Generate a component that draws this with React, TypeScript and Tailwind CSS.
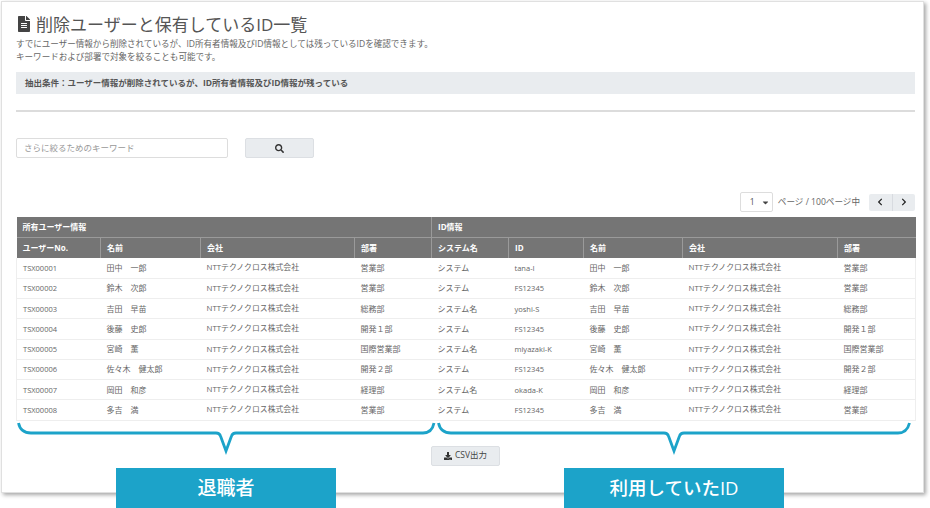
import { FaFileAlt, FaSearch, FaDownload, FaChevronLeft, FaChevronRight, FaCaretDown } from "react-icons/fa";

const rows = [
  ["TSX00001", "田中　一郎", "営業部", "システム", "tana-I"],
  ["TSX00002", "鈴木　次郎", "営業部", "システム", "FS12345"],
  ["TSX00003", "吉田　早苗", "総務部", "システム名", "yoshi-S"],
  ["TSX00004", "後藤　史郎", "開発１部", "システム", "FS12345"],
  ["TSX00005", "宮崎　薫", "国際営業部", "システム名", "miyazaki-K"],
  ["TSX00006", "佐々木　健太郎", "開発２部", "システム", "FS12345"],
  ["TSX00007", "岡田　和彦", "経理部", "システム名", "okada-K"],
  ["TSX00008", "多吉　満", "営業部", "システム", "FS12345"],
];

const company = "NTTテクノクロス株式会社";
const widths = ["w-[84px]", "w-[100px]", "w-[154px]", "w-[77px]", "w-[77px]", "w-[75px]", "w-[99px]", "w-[155px]", "w-[78px]"];
const heads = ["ユーザーNo.", "名前", "会社", "部署", "システム名", "ID", "名前", "会社", "部署"];

export default function App() {
  return (
    <div className="relative h-[508px] w-[930px] overflow-hidden bg-white font-['Open_Sans','Noto_Sans_CJK_JP',sans-serif] text-[#666]">
      <div className="ml-px mt-px h-[492px] w-[923px] border border-[#e0e0e0] bg-white px-[14px] pt-[12px] shadow-[2px_2px_4px_rgba(0,0,0,0.35)]">
        <h1 className="flex h-[20px] items-center gap-[4px] text-[17px] font-normal leading-none text-[#555]">
          <FaFileAlt className="text-[16px] text-[#444]" />
          削除ユーザーと保有しているID一覧
        </h1>
        <p className="mt-[4px] text-[8.55px] leading-[13px] text-[#666]">
          すでにユーザー情報から削除されているが、ID所有者情報及びID情報としては残っているIDを確認できます。
          <br />
          キーワードおよび部署で対象を絞ることも可能です。
        </p>
        <div className="mt-[8px] flex h-[22px] w-[899px] items-center bg-[#e9ecef] pl-[9px] text-[8.5px] font-bold text-[#555]">
          抽出条件：ユーザー情報が削除されているが、ID所有者情報及びID情報が残っている
        </div>
        <div className="mt-[16px] h-[2px] w-[899px] bg-[#dcdcdc]" />

        <div className="mt-[26px] flex items-center gap-[17px]">
          <div className="flex h-[20px] w-[212px] items-center rounded-[2px] border border-[#ddd] pl-[7px] text-[8.5px] text-[#999]">
            さらに絞るためのキーワード
          </div>
          <button className="flex h-[20px] w-[69px] items-center justify-center rounded-[2px] border border-[#dcdfe3] bg-[#e9ecef] text-[#333]">
            <FaSearch className="text-[9px]" />
          </button>
        </div>

        <div className="mt-[34px] flex h-[20px] w-[899px] items-center justify-end text-[8.6px]">
          <div className="flex h-[20px] w-[33px] items-center justify-between rounded-[2px] border border-[#ddd] pl-[9px] pr-[2px] text-[8.5px] text-[#555]">
            1
            <FaCaretDown className="text-[9px] text-[#444]" />
          </div>
          <span className="ml-[5px] text-[#666]">ページ / 100ページ中</span>
          <div className="ml-[9px] flex h-[17px] w-[46px] rounded-[2px] bg-[#e9ecef] text-[#222]">
            <span className="flex flex-1 items-center justify-center border-r border-[#d8dbe0]">
              <FaChevronLeft className="text-[8px]" />
            </span>
            <span className="flex flex-1 items-center justify-center">
              <FaChevronRight className="text-[8px]" />
            </span>
          </div>
        </div>

        <table className="mt-[5px] w-[899px] table-fixed border-collapse text-[8px]">
          <colgroup>
            {widths.map((w, i) => (
              <col key={i} className={w} />
            ))}
          </colgroup>
          <thead className="bg-[#757575] font-bold text-white">
            <tr className="h-[20px]">
              <th colSpan={4} className="border-b border-[#9a9a9a] pl-[6px] text-left font-bold">所有ユーザー情報</th>
              <th colSpan={5} className="border-b border-l border-[#9a9a9a] pl-[6px] text-left font-bold">ID情報</th>
            </tr>
            <tr className="h-[21px]">
              {heads.map((h, i) => (
                <th key={i} className={`pl-[6px] text-left font-bold ${i > 0 ? "border-l border-[#9a9a9a]" : ""}`}>
                  {h}
                </th>
              ))}
            </tr>
          </thead>
          <tbody className="text-[#666]">
            {rows.map((r) => (
              <tr key={r[0]} className="h-[20.25px] border-b border-x border-[#eeeeee]">
                <td className="pl-[6px] pt-px text-[7.5px]">{r[0]}</td>
                <td className="pl-[6px]">{r[1]}</td>
                <td className="pl-[6px] pt-px text-[7.85px]">{company}</td>
                <td className="pl-[6px]">{r[2]}</td>
                <td className="pl-[6px]">{r[3]}</td>
                <td className="pl-[6px] pt-px text-[7.5px]">{r[4]}</td>
                <td className="pl-[6px]">{r[1]}</td>
                <td className="pl-[6px] pt-px text-[7.85px]">{company}</td>
                <td className="pl-[6px]">{r[2]}</td>
              </tr>
            ))}
          </tbody>
        </table>

        <div className="mt-[25px] flex w-[899px] justify-center">
          <button className="flex h-[20px] w-[69px] items-center justify-center gap-[3px] rounded-[2px] border border-[#dcdfe3] bg-[#e9ecef] text-[8.5px] text-[#444]">
            <FaDownload className="text-[8px] text-[#333]" />
            CSV出力
          </button>
        </div>
      </div>

      <svg className="absolute left-0 top-0" width="930" height="508" fill="none" stroke="#1ca3c9" strokeWidth="2.8">
        <path d="M18.5 423 Q20.5 433 31 433 H216 Q219.5 433 220.5 436 L226 451 L231.5 436 Q232.5 433 236 433 H423 Q432 433 434 423" />
        <path d="M438.5 423 Q440.5 433 451 433 H664 Q667.5 433 668.5 436 L674 451 L679.5 436 Q680.5 433 684 433 H898 Q907 433 909.5 423" />
      </svg>

      <div className="absolute left-[116px] top-[468px] flex h-[40px] w-[220px] items-center justify-center bg-[#1ca3c9] text-[19px] font-medium text-white">
        退職者
      </div>
      <div className="absolute left-[564px] top-[468px] flex h-[40px] w-[220px] items-center justify-center bg-[#1ca3c9] text-[18.5px] font-medium text-white">
        利用していたID
      </div>
    </div>
  );
}
